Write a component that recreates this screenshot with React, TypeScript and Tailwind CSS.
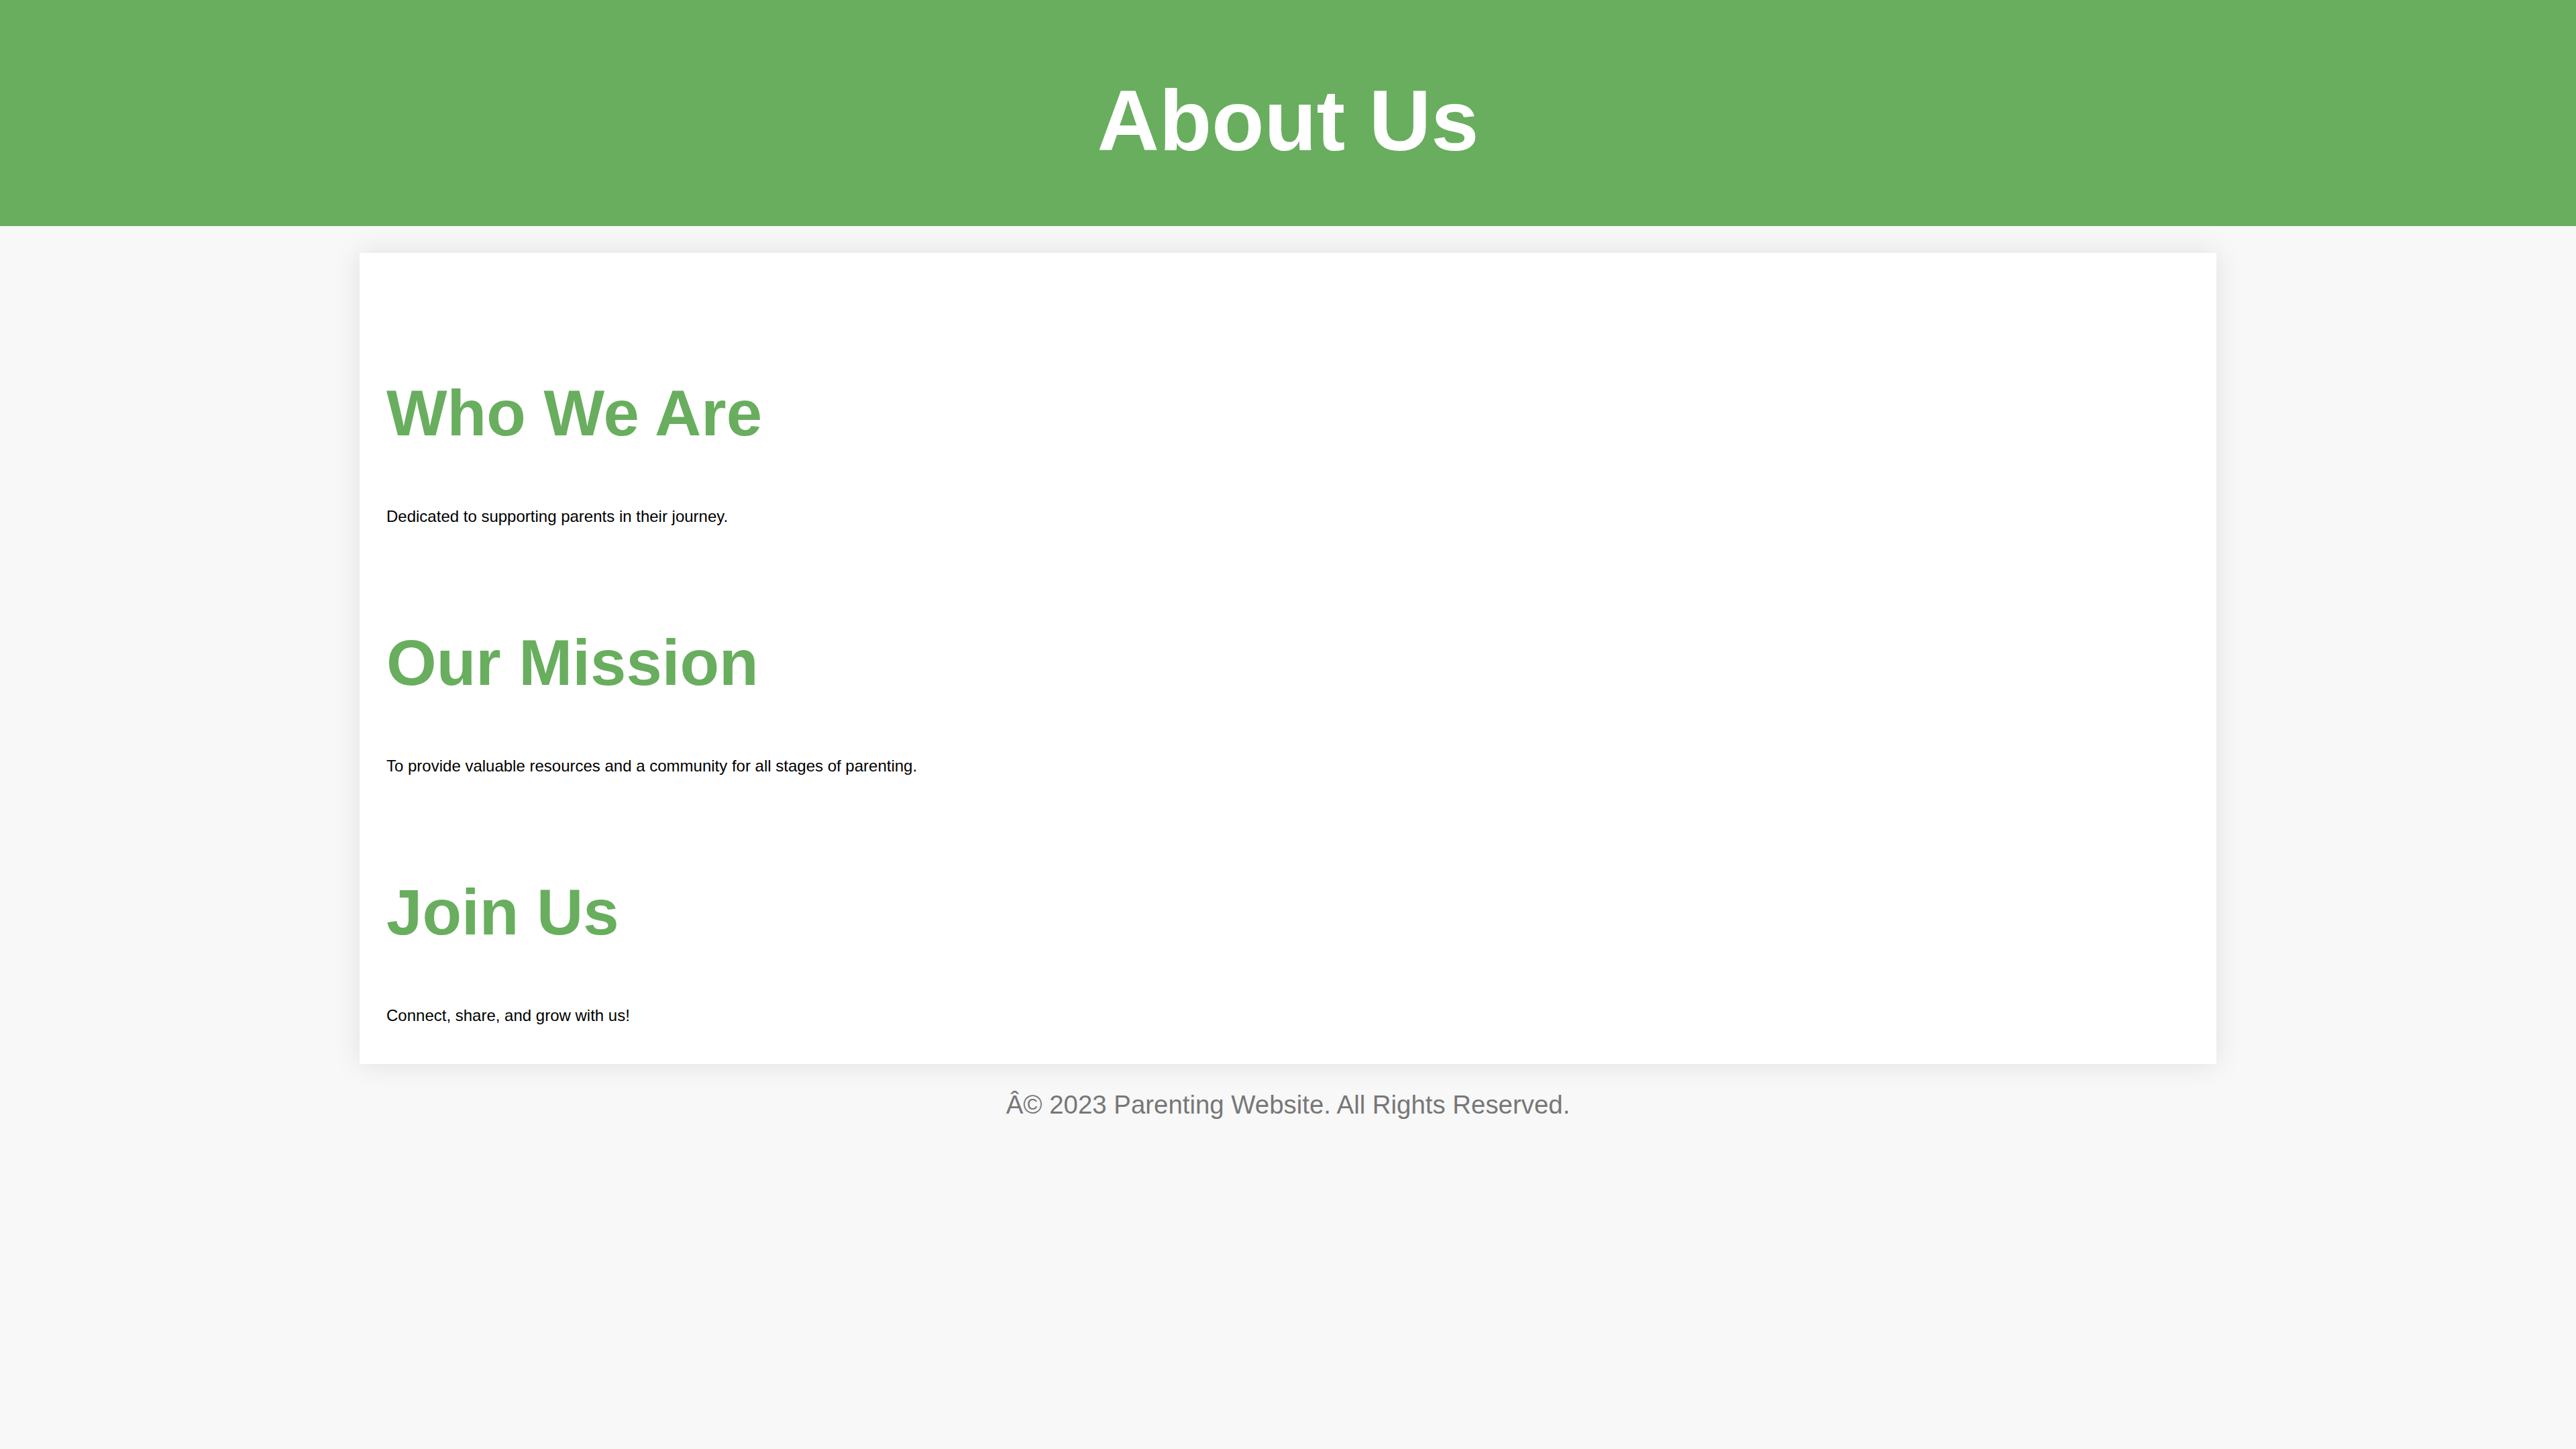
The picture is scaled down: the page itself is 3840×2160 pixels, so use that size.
export default function App() {
  const sections = [
    { title: 'Who We Are', text: 'Dedicated to supporting parents in their journey.' },
    { title: 'Our Mission', text: 'To provide valuable resources and a community for all stages of parenting.' },
    { title: 'Join Us', text: 'Connect, share, and grow with us!' },
  ];

  return (
    <div className="min-h-screen bg-[#f8f8f8] font-['Liberation_Sans',Arial,sans-serif]">
      {/* Header */}
      <header className="bg-[#68ae5e] pt-[116px] pb-[93px] text-center">
        <h1 className="text-[128px] leading-none font-bold text-white">About Us</h1>
      </header>

      {/* Content card */}
      <main className="w-[2768px] mx-auto mt-[40px] bg-white shadow-[0_0_40px_rgba(0,0,0,0.1)] px-[40px] pt-[191px] pb-[60px]">
        <div className="flex flex-col gap-[158px]">
          {sections.map(s => (
            <section key={s.title} className="flex flex-col gap-[94px]">
              <h2 className="text-[96px] leading-none font-bold text-[#68ae5e]">{s.title}</h2>
              <p className="text-[24px] leading-none text-black">{s.text}</p>
            </section>
          ))}
        </div>
      </main>

      <footer className="mt-[42px] text-center text-[38.4px] leading-none text-[#777]">
        Â© 2023 Parenting Website. All Rights Reserved.
      </footer>
    </div>
  );
}
